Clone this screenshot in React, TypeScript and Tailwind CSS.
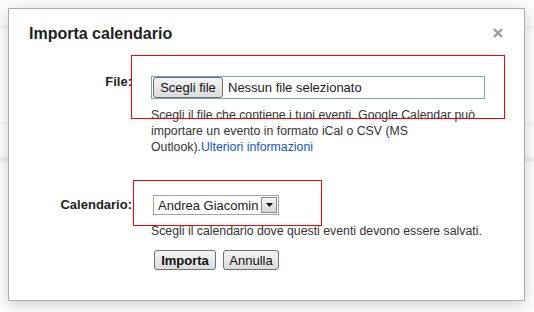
function GrayButton({ children, bold = false, className = "" }: { children: React.ReactNode; bold?: boolean; className?: string }) {
  return (
    <button
      className={`flex h-[20px] items-center justify-center rounded-[3px] border border-[#707070] bg-gradient-to-b from-[#f4f4f4] to-[#dcdcdc] text-[13px] leading-none text-[#111] ${
        bold ? "font-bold" : ""
      } ${className}`}
    >
      {children}
    </button>
  );
}

export default function App() {
  return (
    <div className="relative h-[312px] w-[534px] overflow-hidden bg-white font-['Liberation_Sans',Arial,sans-serif]">
      {/* page behind the dialog */}
      <div className="absolute inset-0 flex flex-col">
        <div className="h-[27px] bg-[#fdfdfd]" />
        <div className="h-px bg-[#ececec]" />
        <div className="h-[95px]" />
        <div className="h-px bg-[#eeeeee]" />
        <div className="h-[33px]" />
        <div className="h-[5px] bg-[#f1f1f1]" />
      </div>

      <div className="absolute left-[8px] top-[8px] h-[293px] w-[517px] border border-[#acacac] bg-white shadow-[0_4px_16px_rgba(0,0,0,0.2)]">
        <div className="flex items-start justify-between pl-[20px] pr-[21px] pt-[15px]">
          <h1 className="text-[16px] font-bold leading-[20px] text-[#222]">Importa calendario</h1>
          <svg width="10" height="10" viewBox="0 0 10 10" className="mt-[4px]">
            <path d="M1 1L9 9M9 1L1 9" stroke="#9a9a9a" strokeWidth="2.4" />
          </svg>
        </div>

        <div className="mt-[32px] grid grid-cols-[123px_334px] gap-x-[19px] text-[13px] text-[#222]">
          <div className="-mt-[2px] text-right font-bold leading-[16px]">File:</div>
          <div>
            <div className="flex h-[23px] items-center border border-[#7f9db9] bg-white">
              <GrayButton className="ml-px h-[21px] w-[70px] rounded-[2px]">Scegli file</GrayButton>
              <span className="ml-[5px] leading-none">Nessun file selezionato</span>
            </div>
            <p className="mt-[8px] w-[333px] text-[12.3px] leading-[16px] text-[#333]">
              Scegli il file che contiene i tuoi eventi. Google Calendar può importare un evento in formato iCal o CSV (MS
              Outlook).<a className="text-[#1155cc]">Ulteriori informazioni</a>
            </p>
          </div>

          <div className="mt-[40px] self-start pt-[2px] text-right font-bold leading-[16px]">Calendario:</div>
          <div className="mt-[40px]">
            <div className="ml-[2px] flex h-[20px] w-[126px] items-center border border-[#a5a5a5] bg-white">
              <span className="flex-1 pl-[4px] leading-none">Andrea Giacomin</span>
              <span className="mr-px flex h-[16px] w-[16px] items-center justify-center border border-[#888] bg-gradient-to-b from-[#f4f4f4] to-[#d8d8d8]">
                <svg width="7" height="4" viewBox="0 0 7 4">
                  <path d="M0 0H7L3.5 4Z" fill="#111" />
                </svg>
              </span>
            </div>
            <p className="mt-[8px] text-[12.3px] leading-[16px] text-[#333]">
              Scegli il calendario dove questi eventi devono essere salvati.
            </p>
            <div className="ml-[3px] mt-[11px] flex gap-[7px]">
              <GrayButton bold className="w-[62px]">Importa</GrayButton>
              <GrayButton className="w-[56px]">Annulla</GrayButton>
            </div>
          </div>
        </div>

        {/* red annotation boxes */}
        <div className="pointer-events-none absolute left-[122px] top-[46px] h-[64px] w-[374px] border border-[#ff0000]" />
        <div className="pointer-events-none absolute left-[124px] top-[171px] h-[46px] w-[189px] border border-[#ff0000]" />
      </div>
    </div>
  );
}
